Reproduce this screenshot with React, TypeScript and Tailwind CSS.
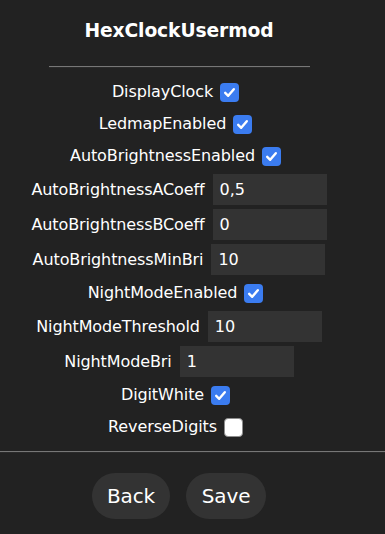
type Field =
  | { kind: "check"; label: string; on: boolean }
  | { kind: "num"; label: string; value: string; width: number };

const fields: Field[] = [
  { kind: "check", label: "DisplayClock", on: true },
  { kind: "check", label: "LedmapEnabled", on: true },
  { kind: "check", label: "AutoBrightnessEnabled", on: true },
  { kind: "num", label: "AutoBrightnessACoeff", value: "0,5", width: 114 },
  { kind: "num", label: "AutoBrightnessBCoeff", value: "0", width: 114 },
  { kind: "num", label: "AutoBrightnessMinBri", value: "10", width: 114 },
  { kind: "check", label: "NightModeEnabled", on: true },
  { kind: "num", label: "NightModeThreshold", value: "10", width: 114 },
  { kind: "num", label: "NightModeBri", value: "1", width: 114 },
  { kind: "check", label: "DigitWhite", on: true },
  { kind: "check", label: "ReverseDigits", on: false },
];

function Check({ on }: { on: boolean }) {
  if (!on) {
    return (
      <span className="ml-[7px] mr-[7px] block h-[19px] w-[19px] rounded-[4px] border-[1.5px] border-[#8d8d8d] bg-white" />
    );
  }
  return (
    <span className="ml-[7px] mr-[7px] flex h-[19px] w-[19px] items-center justify-center rounded-[4px] bg-[#3b7cf0]">
      <svg width="13" height="13" viewBox="0 0 13 13" fill="none">
        <path
          d="M2.2 6.8 L5.2 9.8 L10.8 3.2"
          stroke="#fff"
          strokeWidth="2.4"
          strokeLinecap="round"
          strokeLinejoin="round"
        />
      </svg>
    </span>
  );
}

function Row({ f }: { f: Field }) {
  if (f.kind === "check") {
    return (
      <div className="flex h-[32px] items-center justify-center">
        <span>{f.label}</span>
        <Check on={f.on} />
      </div>
    );
  }
  return (
    <div className="flex h-[35px] items-center justify-center gap-2">
      <span>{f.label}</span>
      <div
        className="flex h-[31px] items-center bg-[#333] pl-[7px] text-left"
        style={{ width: f.width }}
      >
        {f.value}
      </div>
    </div>
  );
}

export default function App() {
  return (
    <div className="min-h-[534px] w-[385px] bg-[#222] text-[16px] tracking-[-0.1px] text-white font-['DejaVu_Sans',Verdana,sans-serif]">
      <div className="w-[358px] pt-[12px]">
        <h3 className="flex h-[38px] items-center justify-center text-[18.7px] font-bold">
          HexClockUsermod
        </h3>
        <div className="mx-auto mt-[16px] h-[2px] w-[261px] border-t border-[#777] border-b border-b-[#2a2a2a]" />
        <div className="mt-[8px] flex flex-col">
          {fields.map((f) => (
            <Row key={f.label} f={f} />
          ))}
        </div>
      </div>
      <div className="mt-[8px] h-[2px] w-full border-t border-[#777] border-b border-b-[#2a2a2a]" />
      <div className="flex w-[358px] justify-center gap-4 pt-[20px]">
        <button className="h-[46px] w-[78px] rounded-full bg-[#333] text-[20px]">
          Back
        </button>
        <button className="h-[46px] w-[80px] rounded-full bg-[#333] text-[20px]">
          Save
        </button>
      </div>
    </div>
  );
}
